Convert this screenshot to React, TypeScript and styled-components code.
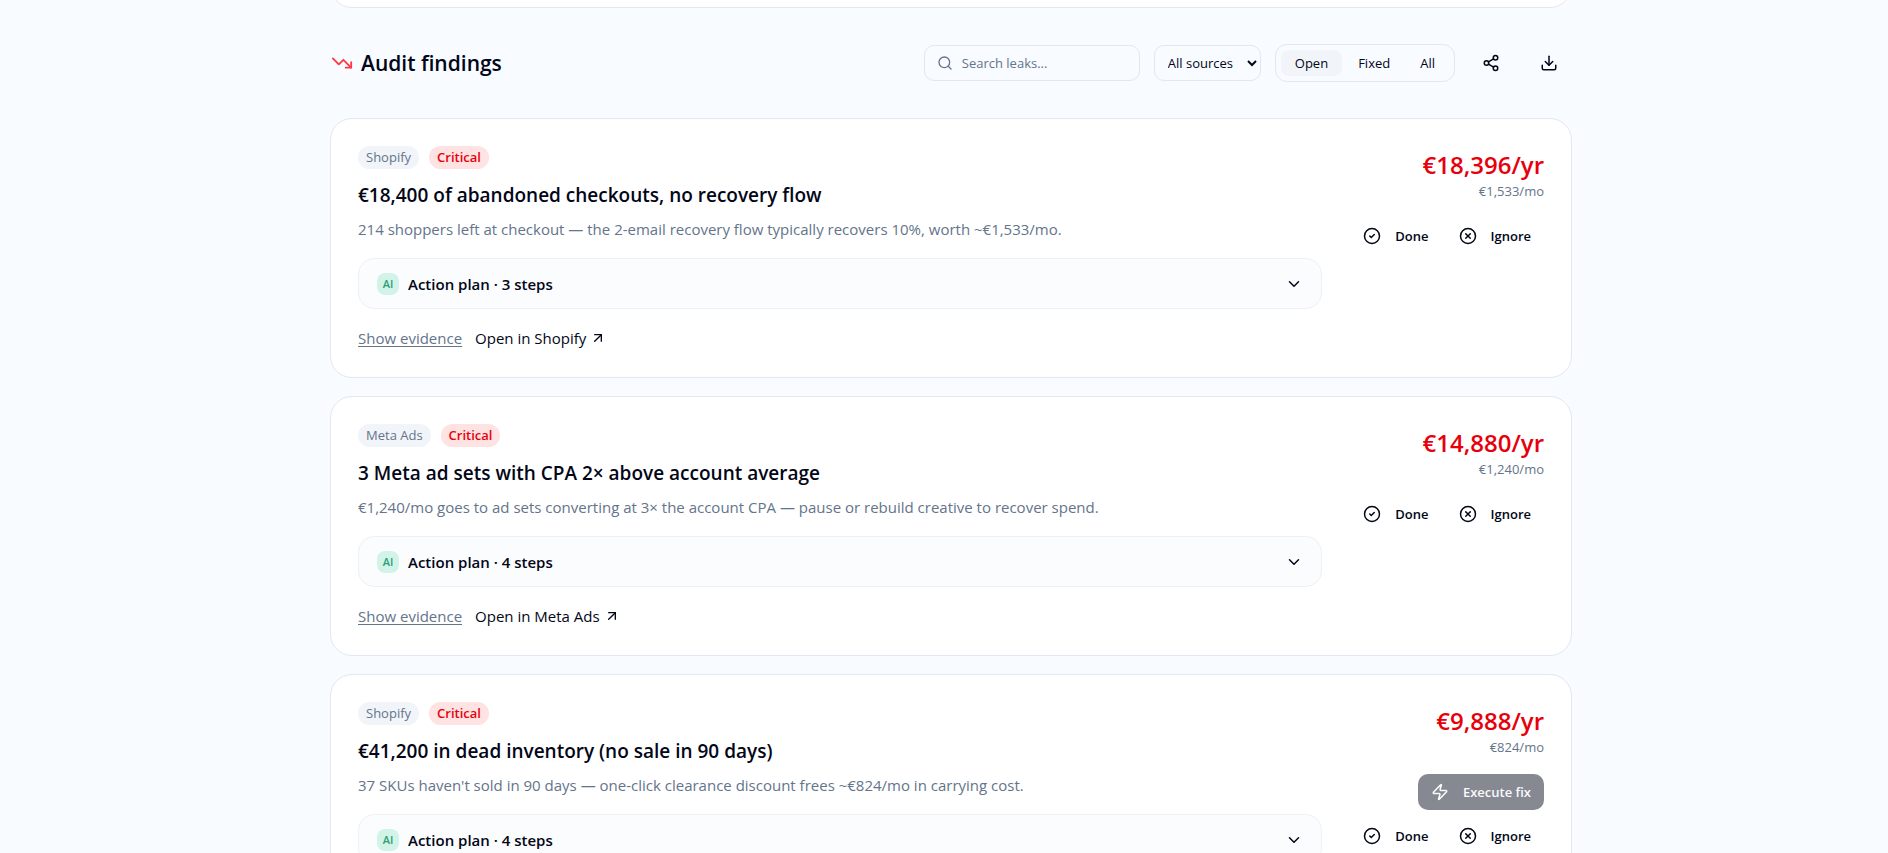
import React, { useState } from 'react';
import styled, { createGlobalStyle } from 'styled-components';
import {
  ArrowUpRight,
  ChevronDown,
  CircleCheck,
  CircleX,
  Download,
  Search,
  Share2,
  TrendingDown,
  Zap,
} from 'lucide-react';

const color = {
  page: '#f8fbff',
  surface: '#ffffff',
  subtle: '#fbfcfe',
  chip: '#f1f5f9',
  border: '#e2e8f0',
  softBorder: '#edf1f6',
  ink: '#020617',
  muted: '#64748b',
  danger: '#e7000b',
  dangerSoft: '#ffe2e2',
  accent: '#2f9e76',
  accentSoft: '#d2f4e8',
};

const GlobalStyle = createGlobalStyle`
  * { box-sizing: border-box; }
  body {
    margin: 0;
    background: ${color.page};
    color: ${color.ink};
    font-family: 'Segoe UI', 'Open Sans', 'Noto Sans', sans-serif;
    font-size: 15px;
    line-height: 24px;
  }
  button, input, select { font: inherit; color: inherit; }
  h2, h3, p { margin: 0; }
`;

const Shell = styled.div`
  height: 100vh;
  overflow: auto;
  scrollbar-width: none;
  padding-left: 14px;
`;

const Content = styled.main`
  max-width: 1242px;
  margin: 0 auto;
`;

const PreviousPanel = styled.section`
  height: 56px;
  margin-top: -48px;
  border: 1px solid ${color.border};
  border-radius: 22px;
  background: ${color.surface};
`;

const Header = styled.header`
  display: flex;
  align-items: center;
  justify-content: space-between;
  gap: 14px;
  margin: 36px 0;
  padding: 0 1px;
`;

const Heading = styled.h2`
  display: flex;
  align-items: center;
  gap: 8px;
  font-size: 21px;
  line-height: 32px;
  font-weight: 600;

  svg { color: #fb3b44; }
`;

const Toolbar = styled.div`
  display: flex;
  align-items: center;
  gap: 14px;
`;

const SearchBox = styled.label`
  display: flex;
  align-items: center;
  gap: 9px;
  width: 216px;
  height: 36px;
  padding: 0 12px;
  border: 1px solid ${color.border};
  border-radius: 10px;
  color: ${color.muted};

  svg { flex: none; }
`;

const SearchInput = styled.input`
  flex: 1;
  min-width: 0;
  padding: 0;
  border: 0;
  outline: 0;
  background: none;
  font-size: 13px;
  line-height: 20px;

  &::placeholder { color: ${color.muted}; opacity: 1; }
`;

const SourceSelect = styled.select`
  width: 107px;
  height: 36px;
  padding: 0 0 0 9px;
  border: 1px solid ${color.border};
  border-radius: 10px;
  background: ${color.page};
  font-size: 13px;
`;

const Segments = styled.div`
  display: flex;
  gap: 2px;
  padding: 5px;
  border: 1px solid ${color.border};
  border-radius: 12px;
`;

const Segment = styled.button<{ $active: boolean }>`
  height: 26px;
  padding: 0 14px;
  border: 0;
  border-radius: 8px;
  background: ${(p) => (p.$active ? color.chip : 'transparent')};
  font-size: 13px;
  line-height: 20px;
`;

const IconButton = styled.button`
  display: grid;
  place-items: center;
  width: 44px;
  height: 36px;
  padding: 0;
  border: 0;
  background: none;
`;

const Findings = styled.div`
  display: grid;
  gap: 18px;
`;

const Card = styled.article`
  display: flex;
  gap: 28px;
  padding: 27px;
  border: 1px solid ${color.border};
  border-radius: 22px;
  background: ${color.surface};
`;

const Details = styled.div`
  flex: 1;
  min-width: 0;
`;

const Badges = styled.div`
  display: flex;
  gap: 10px;
  margin-bottom: 12px;
`;

const Badge = styled.span<{ $critical?: boolean }>`
  height: 23px;
  padding: 0 8px;
  border-radius: 12px;
  background: ${(p) => (p.$critical ? color.dangerSoft : color.chip)};
  color: ${(p) => (p.$critical ? color.danger : color.muted)};
  font-size: 13px;
  line-height: 23px;
  font-weight: ${(p) => (p.$critical ? 600 : 400)};
`;

const Title = styled.h3`
  font-size: 19px;
  line-height: 28px;
  font-weight: 600;
`;

const Summary = styled.p`
  margin: 8px 0 17px;
  color: ${color.muted};
`;

const PlanToggle = styled.button`
  display: flex;
  align-items: center;
  gap: 9px;
  width: 100%;
  height: 51px;
  padding: 0 18px;
  border: 1px solid ${color.softBorder};
  border-radius: 16px;
  background: ${color.subtle};
  font-weight: 600;

  > svg { margin-left: auto; }
`;

const AiMark = styled.span`
  width: 22px;
  height: 22px;
  border-radius: 8px;
  background: ${color.accentSoft};
  color: ${color.accent};
  font-size: 11px;
  line-height: 22px;
  text-align: center;
`;

const Links = styled.div`
  display: flex;
  gap: 13px;
  margin-top: 17px;
`;

const EvidenceButton = styled.button`
  padding: 0;
  border: 0;
  background: none;
  color: ${color.muted};
  text-decoration: underline;
  text-underline-offset: 2px;
`;

const SourceLink = styled.a`
  display: flex;
  align-items: center;
  gap: 4px;
  color: ${color.ink};
  text-decoration: none;
`;

const Aside = styled.div`
  display: flex;
  flex-direction: column;
  align-items: flex-end;
`;

const Yearly = styled.div`
  color: ${color.danger};
  font-size: 24px;
  line-height: 38px;
  font-weight: 600;
`;

const Monthly = styled.div`
  margin-bottom: 20px;
  color: ${color.muted};
  font-size: 13px;
  line-height: 14px;
`;

const Actions = styled.div`
  display: flex;
  gap: 4px;
`;

const ActionButton = styled.button`
  display: flex;
  align-items: center;
  gap: 14px;
  height: 36px;
  padding: 0 13px;
  border: 0;
  border-radius: 10px;
  background: none;
  font-size: 13px;
  font-weight: 600;
`;

const ExecuteButton = styled(ActionButton)`
  margin-bottom: 8px;
  background: #868892;
  color: #f8fafc;
`;

type Finding = {
  source: string;
  title: string;
  summary: string;
  steps: number;
  yearly: string;
  monthly: string;
  executable?: boolean;
};

const findings: Finding[] = [
  {
    source: 'Shopify',
    title: '€18,400 of abandoned checkouts, no recovery flow',
    summary:
      '214 shoppers left at checkout — the 2-email recovery flow typically recovers 10%, worth ~€1,533/mo.',
    steps: 3,
    yearly: '€18,396/yr',
    monthly: '€1,533/mo',
  },
  {
    source: 'Meta Ads',
    title: '3 Meta ad sets with CPA 2× above account average',
    summary:
      '€1,240/mo goes to ad sets converting at 3× the account CPA — pause or rebuild creative to recover spend.',
    steps: 4,
    yearly: '€14,880/yr',
    monthly: '€1,240/mo',
  },
  {
    source: 'Shopify',
    title: '€41,200 in dead inventory (no sale in 90 days)',
    summary:
      "37 SKUs haven't sold in 90 days — one-click clearance discount frees ~€824/mo in carrying cost.",
    steps: 4,
    yearly: '€9,888/yr',
    monthly: '€824/mo',
    executable: true,
  },
];

function FindingCard({ finding }: { finding: Finding }) {
  return (
    <Card>
      <Details>
        <Badges>
          <Badge>{finding.source}</Badge>
          <Badge $critical>Critical</Badge>
        </Badges>
        <Title>{finding.title}</Title>
        <Summary>{finding.summary}</Summary>
        <PlanToggle type="button" aria-expanded={false}>
          <AiMark>AI</AiMark>
          Action plan · {finding.steps} steps
          <ChevronDown size={18} />
        </PlanToggle>
        <Links>
          <EvidenceButton type="button">Show evidence</EvidenceButton>
          <SourceLink href="#">
            Open in {finding.source}
            <ArrowUpRight size={16} />
          </SourceLink>
        </Links>
      </Details>
      <Aside>
        <Yearly>{finding.yearly}</Yearly>
        <Monthly>{finding.monthly}</Monthly>
        {finding.executable && (
          <ExecuteButton type="button" disabled>
            <Zap size={18} />
            Execute fix
          </ExecuteButton>
        )}
        <Actions>
          <ActionButton type="button">
            <CircleCheck size={18} />
            Done
          </ActionButton>
          <ActionButton type="button">
            <CircleX size={18} />
            Ignore
          </ActionButton>
        </Actions>
      </Aside>
    </Card>
  );
}

const filters = ['Open', 'Fixed', 'All'];

export default function App() {
  const [filter, setFilter] = useState('Open');

  return (
    <Shell>
      <GlobalStyle />
      <Content>
        <PreviousPanel />
        <Header>
          <Heading>
            <TrendingDown size={22} />
            Audit findings
          </Heading>
          <Toolbar>
            <SearchBox>
              <Search size={16} />
              <SearchInput aria-label="Search leaks" placeholder="Search leaks..." />
            </SearchBox>
            <SourceSelect aria-label="Source">
              <option>All sources</option>
              <option>Shopify</option>
              <option>Meta Ads</option>
            </SourceSelect>
            <Segments>
              {filters.map((name) => (
                <Segment
                  key={name}
                  type="button"
                  $active={name === filter}
                  aria-pressed={name === filter}
                  onClick={() => setFilter(name)}
                >
                  {name}
                </Segment>
              ))}
            </Segments>
            <IconButton type="button" aria-label="Share">
              <Share2 size={18} />
            </IconButton>
            <IconButton type="button" aria-label="Download">
              <Download size={18} />
            </IconButton>
          </Toolbar>
        </Header>
        <Findings>
          {findings.map((finding) => (
            <FindingCard key={finding.title} finding={finding} />
          ))}
        </Findings>
      </Content>
    </Shell>
  );
}
